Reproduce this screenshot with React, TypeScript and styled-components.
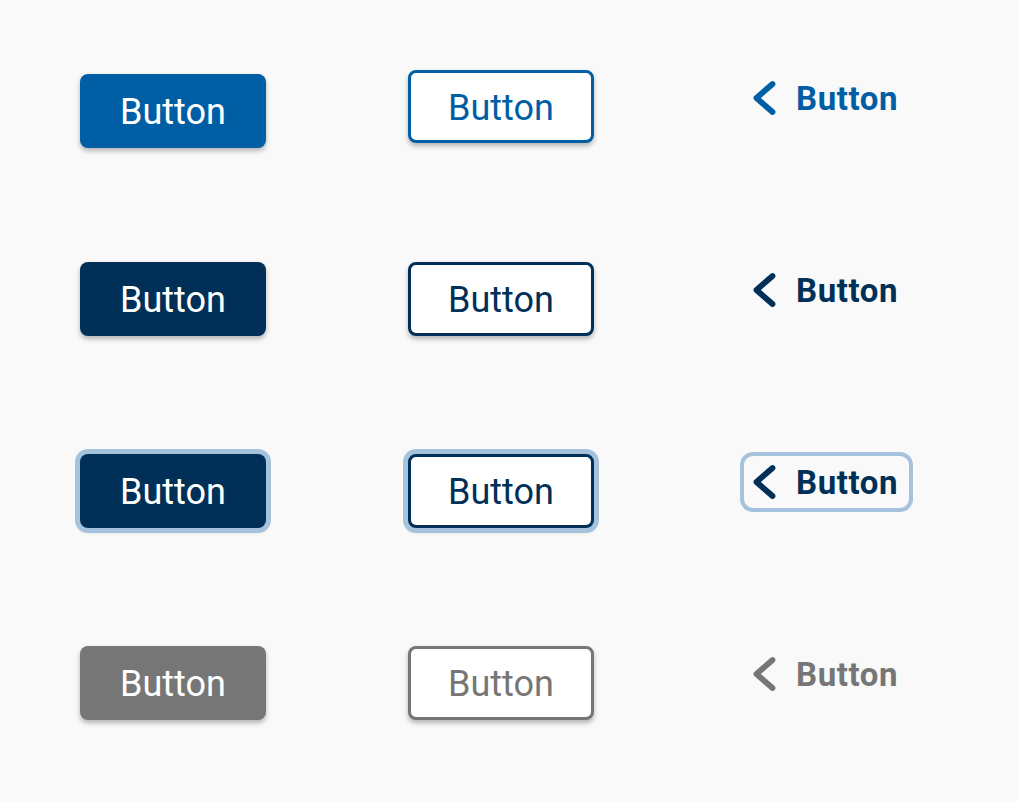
import React from "react";
import styled, { createGlobalStyle, css } from "styled-components";

const Global = createGlobalStyle`
  html, body { margin: 0; padding: 0; background: #f9f9f9; }
  body { font-family: Roboto, "Noto Sans", Arial, sans-serif; }
  #root { width: 1018px; height: 802px; }
`;

type Tone = "blue" | "navy" | "gray";
const toneColor: Record<Tone, string> = {
  blue: "#005ea5",
  navy: "#003057",
  gray: "#767676",
};
const RING = "#a6c3dd";
const SHADOW = "0 3px 5px rgba(0, 0, 0, 0.28)";

const Page = styled.div`
  box-sizing: border-box;
  width: 1018px;
  height: 802px;
  padding: 74px 0 0 80px;
  display: flex;
  flex-direction: column;
  gap: 118px;
`;

const Row = styled.div<{ $pull?: number }>`
  display: grid;
  grid-template-columns: 186px 186px auto;
  grid-template-rows: 74px;
  column-gap: 142px;
  align-items: start;
  height: 74px;
  margin-top: ${(p) => (p.$pull ? -p.$pull : 0)}px;
`;

const baseButton = css`
  box-sizing: border-box;
  width: 186px;
  display: flex;
  align-items: center;
  justify-content: center;
  font-family: Roboto, "Noto Sans", Arial, sans-serif;
  font-size: 36px;
  font-weight: 400;
  border-radius: 8px;
  cursor: pointer;
  padding: 2px 0 0;
`;

const PrimaryButton = styled.button<{ $tone: Tone; $focus?: boolean }>`
  ${baseButton}
  height: 74px;
  border: none;
  color: #ffffff;
  background: ${(p) => toneColor[p.$tone]};
  box-shadow: ${(p) => (p.$focus ? `0 0 0 5px ${RING}, ${SHADOW}` : SHADOW)};
`;

const OutlineButton = styled.button<{ $tone: Tone; $focus?: boolean; $raise?: number }>`
  ${baseButton}
  height: ${(p) => (p.$raise ? 73 : 74)}px;
  margin-top: ${(p) => -(p.$raise ?? 0)}px;
  background: #ffffff;
  color: ${(p) => toneColor[p.$tone]};
  border: 3px solid ${(p) => toneColor[p.$tone]};
  box-shadow: ${(p) => (p.$focus ? `0 0 0 5px ${RING}, ${SHADOW}` : SHADOW)};
`;

const TextButton = styled.button<{ $tone: Tone; $focus?: boolean; $raise?: number }>`
  box-sizing: border-box;
  justify-self: start;
  margin-left: 4px;
  margin-top: ${(p) => -2 - (p.$raise ?? 0)}px;
  height: 60px;
  display: flex;
  align-items: center;
  gap: 19px;
  padding: 0 11px 0 9px;
  border: 4px solid ${(p) => (p.$focus ? RING : "transparent")};
  border-radius: 13px;
  background: transparent;
  color: ${(p) => toneColor[p.$tone]};
  font-family: Roboto, "Noto Sans", Arial, sans-serif;
  font-size: 33px;
  font-weight: 700;
  letter-spacing: 0.6px;
  cursor: pointer;
`;

const Chevron = ({ color }: { color: string }) => (
  <svg width="24" height="36" viewBox="0 0 24 36" aria-hidden="true">
    <path
      d="M19.5 4 L3.5 18 L19.5 32"
      fill="none"
      stroke={color}
      strokeWidth="5.8"
      strokeLinecap="round"
      strokeLinejoin="round"
    />
  </svg>
);

const rows: { tone: Tone; focus?: boolean; raise?: number; pull?: number }[] = [
  { tone: "blue", raise: 4 },
  { tone: "navy", pull: 4 },
  { tone: "navy", focus: true },
  { tone: "gray" },
];

export default function App() {
  return (
    <>
      <Global />
      <Page>
        {rows.map((r, i) => (
          <Row key={i} $pull={r.pull}>
            <PrimaryButton $tone={r.tone} $focus={r.focus}>
              Button
            </PrimaryButton>
            <OutlineButton $tone={r.tone} $focus={r.focus} $raise={r.raise}>
              Button
            </OutlineButton>
            <TextButton $tone={r.tone} $focus={r.focus} $raise={r.raise}>
              <Chevron color={toneColor[r.tone]} />
              <span>Button</span>
            </TextButton>
          </Row>
        ))}
      </Page>
    </>
  );
}
